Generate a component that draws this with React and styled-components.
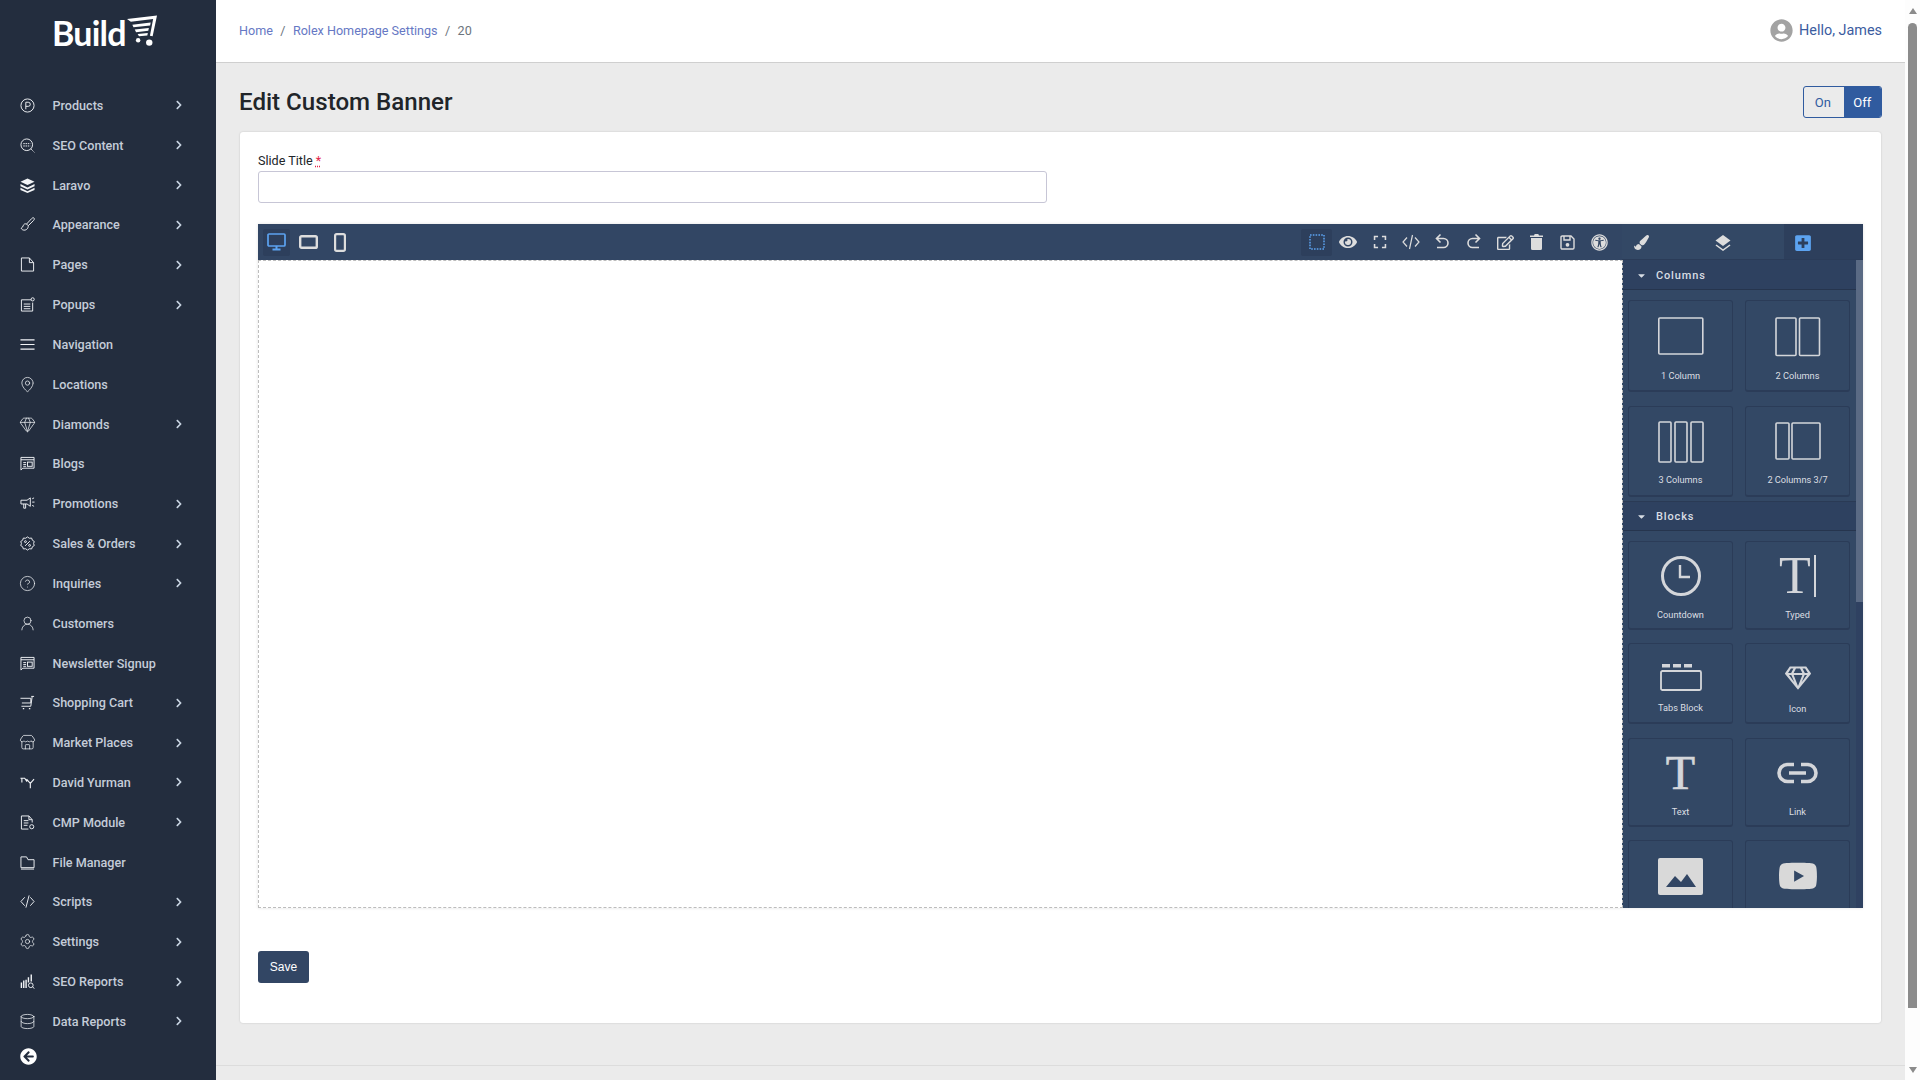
import React from "react";
import styled, { createGlobalStyle } from "styled-components";
import {
  FaChevronRight,
  FaEye,
  FaUniversalAccess,
  FaPaintBrush,
  FaPlusSquare,
  FaArrowCircleLeft,
  FaRegEdit,
  FaYoutube,
  FaUserCircle,
  FaCaretDown,
  FaRegGem,
} from "react-icons/fa";
import { Gem, CircleHelp, Database, Settings, MapPin, Store, UserRound } from "lucide-react";

const GlobalStyle = createGlobalStyle`
  html, body {
    margin: 0;
    height: 100%;
    overflow: hidden;
    background: #ebebeb;
    font-family: Roboto, "Liberation Sans", sans-serif;
  }
  * { box-sizing: border-box; }
`;

const Line = ({ children }) => (
  <svg width="15" height="15" viewBox="0 0 16 16" fill="none" stroke="currentColor" strokeWidth="1">
    {children}
  </svg>
);

const lucide = (Icon) => () => <Icon size={17} strokeWidth={1.05} />;

const NewsIcon = () => (
  <Line>
    <path d="M1 15V1.5h14V13H3zM1 4h14M3.5 7h3M3.5 9h3M3.5 11h3" />
    <rect x="8" y="6.5" width="5" height="4.5" />
  </Line>
);

const sideIcons = {
  products: () => (
    <Line>
      <circle cx="8" cy="8" r="7" />
      <path d="M6.2 12V4.5h2.6a2.2 2.2 0 010 4.4H6.2" />
    </Line>
  ),
  seo: () => (
    <Line>
      <circle cx="7.2" cy="7.2" r="6.2" />
      <path d="M11.5 11.5l3.8 3.8M3.5 6h7.5M3.5 8.5h7.5" strokeDasharray="1.6 .8" />
    </Line>
  ),
  layers: () => (
    <svg width="15" height="15" viewBox="0 0 16 16" fill="currentColor">
      <path d="M8 .5L15.5 4 8 7.5.5 4z" />
      <path d="M.5 6.5L8 10l7.5-3.5v2.3L8 12.3.5 8.8z" />
      <path d="M.5 10.5L8 14l7.5-3.5v2.2L8 16 .5 12.7z" />
    </svg>
  ),
  brush: () => (
    <Line>
      <path d="M15 1.2c-.8-.8-1.8-.3-2.6.5L7 7.5l1.8 1.8 5.6-5.5c.7-.8 1.3-1.8.6-2.6zM7 7.5c-2-.7-3.2.3-3.6 1.8-.3 1.2-1 2-2.2 2.7 1.2 2.6 5 2.6 6.5.6.9-1.2 1.2-2 1.1-3.3" />
    </Line>
  ),
  page: () => (
    <Line>
      <path d="M1.5 1h8.5l4.5 5v9h-13zM10 1v5h4.5" />
    </Line>
  ),
  popup: () => (
    <Line>
      <path d="M12 3H1.5v12h12V6M4 7.5h7M4 10h7M4 12.5h7" />
      <circle cx="13.5" cy="2.5" r="1.7" />
    </Line>
  ),
  nav: () => (
    <Line>
      <path d="M.5 3h15M.5 8h15M.5 13h15" strokeWidth="1.3" />
    </Line>
  ),
  pin: lucide(MapPin),
  gem: lucide(Gem),
  news: NewsIcon,
  promo: () => (
    <Line>
      <path d="M1 4.5h6.5L11 2v9L7.5 8.5H1zM4 8.5v4.5h2V8.5M13 3l2-1M13 6.5h2.5M13 10l2 1" />
    </Line>
  ),
  sales: () => (
    <Line>
      <path d="M8 1l2 1.4 2.4-.2.8 2.3 2 1.3-.7 2.2.7 2.2-2 1.3-.8 2.3-2.4-.2L8 15l-2-1.4-2.4.2-.8-2.3-2-1.3.7-2.2L.8 5.8l2-1.3.8-2.3 2.4.2z" />
      <path d="M5.5 10.5l5-5" />
      <circle cx="5.8" cy="6" r="1" />
      <circle cx="10.2" cy="10" r="1" />
    </Line>
  ),
  help: lucide(CircleHelp),
  user: lucide(UserRound),
  cart: () => (
    <Line>
      <path d="M.5 3.5h11v5H2M12 1.5h3M13 1.5L11.5 12H1.5" />
      <path d="M3 14.5h1.5M9.5 14.5H11" strokeWidth="1.5" />
    </Line>
  ),
  store: lucide(Store),
  dy: () => (
    <Line>
      <path d="M.5 3.5H5l2.5 3.5M2 3.5V8M7 4.5l4 4.5v5M15 4.5L11 9" strokeWidth="1.2" />
    </Line>
  ),
  cmp: () => (
    <Line>
      <path d="M13 8V5L9.5 1H1.5v14H9M9.5 1v4H13M4 6h5M4 8.5h5M4 11h4" />
      <circle cx="12.5" cy="12.5" r="2.2" fill="none" />
    </Line>
  ),
  folder: () => (
    <Line>
      <path d="M1 2h6l1.5 3H15v8.5H1zM1 15h14" />
    </Line>
  ),
  code: () => (
    <Line>
      <path d="M5 3.5L1 8l4 4.5M11 3.5L15 8l-4 4.5M9.7 1.5L6.3 14.5" />
    </Line>
  ),
  gear: lucide(Settings),
  report: () => (
    <Line>
      <path d="M1.5 15V9M4 15V7M6.5 15V6M9 9V3.5M12 8V.5" strokeWidth="1.5" />
      <circle cx="11.5" cy="12" r="2.5" />
      <path d="M13.4 13.8l2 1.7" />
    </Line>
  ),
  data: lucide(Database),
};

const menu = [
  ["Products", "products", true],
  ["SEO Content", "seo", true],
  ["Laravo", "layers", true],
  ["Appearance", "brush", true],
  ["Pages", "page", true],
  ["Popups", "popup", true],
  ["Navigation", "nav", false],
  ["Locations", "pin", false],
  ["Diamonds", "gem", true],
  ["Blogs", "news", false],
  ["Promotions", "promo", true],
  ["Sales & Orders", "sales", true],
  ["Inquiries", "help", true],
  ["Customers", "user", false],
  ["Newsletter Signup", "news", false],
  ["Shopping Cart", "cart", true],
  ["Market Places", "store", true],
  ["David Yurman", "dy", true],
  ["CMP Module", "cmp", true],
  ["File Manager", "folder", false],
  ["Scripts", "code", true],
  ["Settings", "gear", true],
  ["SEO Reports", "report", true],
  ["Data Reports", "data", true],
];

const ToolStroke = ({ children, size = 18 }) => (
  <svg width={size} height={size} viewBox="0 0 18 18" fill="none" stroke="currentColor" strokeWidth="1.6">
    {children}
  </svg>
);

const ColumnsIcon = ({ rects }) => (
  <svg width="46" height="42" viewBox="0 0 46 42" fill="none" stroke="#d4d6da" strokeWidth="1.6">
    {rects.map((r, i) => (
      <rect key={i} x={r[0]} y="1" width={r[1]} height={r[2]} rx="1" />
    ))}
  </svg>
);

const App = () => {
  return (
    <Page>
      <GlobalStyle />
      <Sidebar>
        <Logo>
          <LogoText>Build</LogoText>
          <svg width="30" height="32" viewBox="0 0 31 32" fill="#fff">
            <path d="M0 3.5l31-3.5-4.5 21.5-2.8-.6L27 3.5 4 6.5z" />
            <path d="M5.5 9.5l19-2.2-.6 3-17.2 1.8zM8 14.5l14.6-1.6-.6 2.9-12.6 1.4zM11 19l10.5-1-.5 2.7-8.6.8z" />
            <circle cx="11.5" cy="25.5" r="2.3" />
            <circle cx="23" cy="28" r="3.3" />
          </svg>
        </Logo>
        <Menu>
          {menu.map(([label, icon, sub]) => {
            const Icon = sideIcons[icon];
            return (
              <MenuItem key={label}>
                <MenuIcon>
                  <Icon />
                </MenuIcon>
                {label}
                {sub && (
                  <MenuChevron>
                    <FaChevronRight size={10} />
                  </MenuChevron>
                )}
              </MenuItem>
            );
          })}
        </Menu>
        <Collapse>
          <FaArrowCircleLeft size={17} />
        </Collapse>
      </Sidebar>

      <Main>
        <TopBar>
          <Crumbs>
            <CrumbLink>Home</CrumbLink>
            <CrumbSep>/</CrumbSep>
            <CrumbLink>Rolex Homepage Settings</CrumbLink>
            <CrumbSep>/</CrumbSep>
            <span>20</span>
          </Crumbs>
          <Hello>
            <FaUserCircle size={23} color="#a3a3a3" />
            Hello, James
          </Hello>
        </TopBar>

        <Content>
          <TitleRow>
            <Title>Edit Custom Banner</Title>
            <Toggle>
              <ToggleOption>On</ToggleOption>
              <ToggleOption $active>Off</ToggleOption>
            </Toggle>
          </TitleRow>

          <Card>
            <Label>
              Slide Title <Required>*</Required>
            </Label>
            <TextInput />

            <Editor>
              <Toolbar>
                <DeviceButton $active>
                  <svg width="19" height="18" viewBox="0 0 19 18" fill="none" stroke="currentColor" strokeWidth="1.7">
                    <rect x="1" y="1" width="17" height="12" rx="1" />
                    <path d="M9.5 13v3M5.5 16.5h8" strokeWidth="2" />
                  </svg>
                </DeviceButton>
                <DeviceButton>
                  <svg width="19" height="14" viewBox="0 0 19 14" fill="none" stroke="currentColor" strokeWidth="2.4">
                    <rect x="1.2" y="1.2" width="16.6" height="11.6" rx="1.4" />
                  </svg>
                </DeviceButton>
                <DeviceButton>
                  <svg width="12" height="19" viewBox="0 0 12 19" fill="none" stroke="currentColor" strokeWidth="2.2">
                    <rect x="1.1" y="1.1" width="9.8" height="16.8" rx="1.6" />
                  </svg>
                </DeviceButton>
                <ToolActions>
                  <ActionButton $active>
                    <svg width="16" height="16" viewBox="0 0 16 16" fill="none" stroke="#5ca3f0" strokeWidth="1.5" strokeDasharray="1.6 1.2">
                      <rect x="1" y="1" width="14" height="14" />
                    </svg>
                  </ActionButton>
                  <ActionButton>
                    <FaEye size={18} />
                  </ActionButton>
                  <ActionButton>
                    <ToolStroke size={14}>
                      <path d="M2 6.5V2h4.5M11.5 2H16v4.5M16 11.5V16h-4.5M6.5 16H2v-4.5" strokeWidth="2" />
                    </ToolStroke>
                  </ActionButton>
                  <ActionButton>
                    <ToolStroke>
                      <path d="M5 4.5L1 9l4 4.5M13 4.5L17 9l-4 4.5M10.5 2L7.5 16" strokeWidth="1.2" />
                    </ToolStroke>
                  </ActionButton>
                  <ActionButton>
                    <ToolStroke>
                      <path d="M7.5 1.5L3.5 5.5l4 4M4 5.5h6.5a4.5 4.5 0 010 9H4" />
                    </ToolStroke>
                  </ActionButton>
                  <ActionButton>
                    <ToolStroke>
                      <path d="M10.5 1.5l4 4-4 4M14 5.5H7.5a4.5 4.5 0 000 9H14" />
                    </ToolStroke>
                  </ActionButton>
                  <ActionButton>
                    <FaRegEdit size={17} />
                  </ActionButton>
                  <ActionButton>
                    <svg width="13" height="16" viewBox="0 0 13 16" fill="currentColor">
                      <path d="M0 1.5h4L4.7 0h3.6L9 1.5h4V3H0zM1 4h11v10.5a1.5 1.5 0 01-1.5 1.5h-8A1.5 1.5 0 011 14.5z" />
                    </svg>
                  </ActionButton>
                  <ActionButton>
                    <svg width="15" height="15" viewBox="0 0 15 15" fill="none" stroke="currentColor" strokeWidth="1.4">
                      <path d="M1 2.2C1 1.5 1.5 1 2.2 1H11l3 3v8.8c0 .7-.5 1.2-1.2 1.2H2.2c-.7 0-1.2-.5-1.2-1.2zM4 1.5V5h6V1.5" />
                      <circle cx="7.5" cy="9.8" r="1.2" fill="currentColor" />
                    </svg>
                  </ActionButton>
                  <ActionButton>
                    <FaUniversalAccess size={17} />
                  </ActionButton>
                </ToolActions>
                <PanelTabs>
                  <PanelTab>
                    <FaPaintBrush size={15} />
                  </PanelTab>
                  <PanelTab>
                    <svg width="16" height="16" viewBox="0 0 16 16" fill="currentColor">
                      <path d="M8 0l7.5 5.5L8 11 .5 5.5z" />
                      <path d="M1.5 9.5l6.5 4.7 6.5-4.7 1 1L8 16 .5 10.5z" />
                    </svg>
                  </PanelTab>
                  <PanelTab $active>
                    <FaPlusSquare size={18} />
                  </PanelTab>
                </PanelTabs>
              </Toolbar>

              <EditorBody>
                <Canvas />
                <BlocksPanel>
                  <BlocksList>
                    <SectionHeader>
                      <FaCaretDown size={11} />
                      Columns
                    </SectionHeader>
                    <TileGrid>
                      <Tile $h={92} $top={16} $bottom={8}>
                        <ColumnsIcon rects={[[0.8, 44, 36]]} />
                        <TileLabel>1 Column</TileLabel>
                      </Tile>
                      <Tile $h={92} $top={16} $bottom={8}>
                        <ColumnsIcon rects={[[1, 20, 37.5], [24.5, 20, 37.5]]} />
                        <TileLabel>2 Columns</TileLabel>
                      </Tile>
                      <Tile $h={91} $top={14} $bottom={9}>
                        <ColumnsIcon rects={[[1, 12, 40], [17, 12, 40], [33, 12, 40]]} />
                        <TileLabel>3 Columns</TileLabel>
                      </Tile>
                      <Tile $h={91} $top={15} $bottom={9}>
                        <ColumnsIcon rects={[[1, 13, 36], [17, 28, 36]]} />
                        <TileLabel>2 Columns 3/7</TileLabel>
                      </Tile>
                    </TileGrid>
                    <SectionHeader $blocks>
                      <FaCaretDown size={11} />
                      Blocks
                    </SectionHeader>
                    <TileGrid>
                      <Tile $h={89} $top={13} $bottom={7}>
                        <svg width="42" height="42" viewBox="0 0 42 42" fill="none" stroke="#d4d6da" strokeWidth="3">
                          <circle cx="21" cy="21" r="18.5" />
                          <path d="M20 10v12h10" strokeWidth="2.4" />
                        </svg>
                        <TileLabel>Countdown</TileLabel>
                      </Tile>
                      <Tile $h={89} $top={12} $bottom={7}>
                        <TypedMark>
                          T<TypedCaret />
                        </TypedMark>
                        <TileLabel>Typed</TileLabel>
                      </Tile>
                      <Tile $h={81} $top={20} $bottom={8}>
                        <svg width="42" height="27" viewBox="0 0 42 27" fill="#d4d6da">
                          <path d="M2 0h8v3.5H2zM13 0h8v3.5h-8zM24 0h8v3.5h-8z" />
                          <rect x="1" y="7" width="40" height="19" rx="1.5" fill="none" stroke="#d4d6da" strokeWidth="1.8" />
                        </svg>
                        <TileLabel>Tabs Block</TileLabel>
                      </Tile>
                      <Tile $h={81} $top={21} $bottom={7}>
                        <FaRegGem size={26} color="#d4d6da" />
                        <TileLabel>Icon</TileLabel>
                      </Tile>
                      <Tile $h={89} $top={14} $bottom={7}>
                        <TextMark>T</TextMark>
                        <TileLabel>Text</TileLabel>
                      </Tile>
                      <Tile $h={89} $top={23} $bottom={7}>
                        <svg width="41" height="22" viewBox="0 0 41 22" fill="none" stroke="#d4d6da" strokeWidth="3.6">
                          <path d="M17 2.5h-6.5a8.5 8.5 0 000 17H17M24 2.5h6.5a8.5 8.5 0 010 17H24M12 11h17" />
                        </svg>
                        <TileLabel>Link</TileLabel>
                      </Tile>
                      <Tile $h={89} $top={17}>
                        <svg width="45" height="37" viewBox="0 0 45 37">
                          <rect width="45" height="37" rx="2" fill="#d9d9d9" />
                          <path d="M8 29l9-11 6 6 6-8 9 13z" fill="#324664" />
                        </svg>
                      </Tile>
                      <Tile $h={89} $top={15}>
                        <FaYoutube size={40} color="#d9d9d9" />
                      </Tile>
                    </TileGrid>
                  </BlocksList>
                  <PanelScroll>
                    <PanelThumb />
                  </PanelScroll>
                </BlocksPanel>
              </EditorBody>
            </Editor>

            <SaveButton>Save</SaveButton>
          </Card>
          <FooterLine />
        </Content>
      </Main>

      <PageScroll>
        <ScrollArrow />
        <ScrollThumb />
        <ScrollArrow $down />
      </PageScroll>
    </Page>
  );
};

const Page = styled.div`
  display: flex;
  width: 1920px;
  height: 1080px;
  overflow: hidden;
`;

const Sidebar = styled.aside`
  flex: 0 0 216px;
  display: flex;
  flex-direction: column;
  height: 1080px;
  background: #232d3e;
`;

const Logo = styled.div`
  height: 85.5px;
  padding: 15px 0 0 52px;
  display: flex;
  align-items: flex-start;
  gap: 1px;
`;

const LogoText = styled.span`
  font-family: Lato, sans-serif;
  font-size: 34px;
  line-height: 36px;
  font-weight: 700;
  letter-spacing: -0.8px;
  color: #fff;
`;

const Menu = styled.nav`
  display: flex;
  flex-direction: column;
`;

const MenuItem = styled.a`
  height: 39.83px;
  padding: 0 32px 0 20px;
  display: flex;
  align-items: center;
  font-size: 12.6px;
  font-weight: 500;
  color: #c4ccd8;
`;

const MenuIcon = styled.span`
  flex: 0 0 32.5px;
  display: flex;
  color: #f2f4f7;

  svg.lucide {
    margin-left: -1px;
  }
`;

const MenuChevron = styled.span`
  margin-left: auto;
  display: flex;
  color: #c9d5e3;
`;

const Collapse = styled.div`
  padding: 7px 0 0 20px;
  display: flex;
  color: #fff;
`;

const Main = styled.main`
  flex: 1;
  display: flex;
  flex-direction: column;
  min-width: 0;
`;

const TopBar = styled.header`
  height: 63px;
  flex-shrink: 0;
  padding: 0 23px 1px 23px;
  display: flex;
  align-items: center;
  justify-content: space-between;
  background: #fff;
  border-bottom: 1px solid #cfcfcf;
`;

const Crumbs = styled.div`
  display: flex;
  gap: 7.4px;
  font-size: 12.6px;
  color: #6c757d;
`;

const CrumbLink = styled.a`
  color: #6678c4;
`;

const CrumbSep = styled.span`
  color: #6c757d;
`;

const Hello = styled.div`
  display: flex;
  align-items: center;
  gap: 6px;
  font-size: 14.4px;
  color: #3b5c9f;
`;

const Content = styled.div`
  flex: 1;
  padding: 23px 24px 0;
  background: #ebebeb;
`;

const TitleRow = styled.div`
  height: 46px;
  display: flex;
  align-items: flex-start;
  justify-content: space-between;
`;

const Title = styled.h1`
  margin: 0 0 0 -1px;
  font-size: 24.1px;
  line-height: 32px;
  font-weight: 500;
  color: #212529;
`;

const Toggle = styled.div`
  display: flex;
  height: 32px;
  width: 79px;
  margin-right: -1px;
  border: 1px solid #305b9f;
  border-radius: 3px;
  overflow: hidden;
`;

const ToggleOption = styled.span`
  flex: 1;
  padding-right: ${(p) => (p.$active ? "0" : "2px")};
  display: flex;
  align-items: center;
  justify-content: center;
  font-size: 13px;
  color: ${(p) => (p.$active ? "#fff" : "#305b9f")};
  background: ${(p) => (p.$active ? "#305b9f" : "transparent")};
`;

const Card = styled.section`
  height: 891px;
  padding: 21px 18px 0;
  display: flex;
  flex-direction: column;
  background: #fff;
  border-radius: 3px;
  box-shadow: 0 0 2px rgba(0, 0, 0, 0.18);
`;

const Label = styled.label`
  font-size: 12.6px;
  line-height: 16px;
  margin-bottom: 2px;
  color: #212529;
`;

const Required = styled.abbr`
  color: #e3264a;
  text-decoration: underline dotted;
`;

const TextInput = styled.input`
  width: 789px;
  height: 32px;
  flex-shrink: 0;
  border: 1px solid #c7c6d6;
  border-radius: 3px;
  outline: none;
`;

const Editor = styled.div`
  margin-top: 21px;
  height: 684px;
  display: flex;
  flex-direction: column;
  box-shadow: 0 0 3px rgba(0, 0, 0, 0.12);
`;

const Toolbar = styled.div`
  height: 36px;
  flex-shrink: 0;
  padding-left: 5px;
  display: flex;
  align-items: center;
  background: #324664;
  color: #ddd;
`;

const DeviceButton = styled.span`
  width: 27px;
  height: 27px;
  margin-right: 5.5px;
  margin-left: -0.5px;
  display: flex;
  align-items: center;
  justify-content: center;
  border-radius: 2px;
  color: ${(p) => (p.$active ? "#5ca3f0" : "#ddd")};
  background: ${(p) => (p.$active ? "#2d3f5c" : "transparent")};
`;

const ToolActions = styled.div`
  margin-left: auto;
  padding-right: 7px;
  display: flex;
  align-items: center;
`;

const ActionButton = styled.span`
  width: 31.4px;
  height: 27px;
  display: flex;
  align-items: center;
  justify-content: center;
  border-radius: 2px;
  background: ${(p) => (p.$active ? "#2d3f5c" : "transparent")};
`;

const PanelTabs = styled.div`
  flex: 0 0 241px;
  height: 36px;
  display: flex;
`;

const PanelTab = styled.span`
  flex: 1;
  padding: 2px 0 0 ${(p) => (p.$active ? "10px" : "12px")};
  display: flex;
  align-items: center;
  color: ${(p) => (p.$active ? "#5ca3f0" : "#ddd")};
  background: ${(p) => (p.$active ? "#2d3f5c" : "#334865")};
  border-bottom: 1px solid #2b3c58;
`;

const EditorBody = styled.div`
  flex: 1;
  min-height: 0;
  display: flex;
`;

const Canvas = styled.div`
  flex: 1;
  background: #fff;
  border: 1px dashed #bdbdbd;
  border-right: none;
`;

const BlocksPanel = styled.div`
  flex: 0 0 241px;
  margin-left: -1px;
  display: flex;
  overflow: hidden;
  background: #334865;
  border-left: 1px dashed #bdbdbd;
`;

const BlocksList = styled.div`
  flex: 1;
  min-width: 0;
`;

const SectionHeader = styled.div`
  height: 30px;
  margin-top: ${(p) => (p.$blocks ? "4px" : "0")};
  padding: 2px 0 0 13px;
  display: flex;
  align-items: center;
  gap: 9px;
  font-size: 11px;
  font-weight: 500;
  letter-spacing: 0.85px;
  color: #d8dde4;
  background: #2e4160;
  border-bottom: 1px solid #26354e;
  border-top: ${(p) => (p.$blocks ? "1px solid #2a3a55" : "none")};
`;

const TileGrid = styled.div`
  padding: 10px 5px 0;
  display: grid;
  grid-template-columns: 105px 105px;
  column-gap: 12px;
  row-gap: 13.5px;
`;

const Tile = styled.div`
  height: ${(p) => p.$h}px;
  padding: ${(p) => p.$top}px 0 ${(p) => p.$bottom || 0}px;
  display: flex;
  flex-direction: column;
  align-items: center;
  border: 1px solid #2b3c58;
  border-bottom-width: 2px;
  border-radius: 3px;
  background: #334865;
`;

const TileLabel = styled.span`
  margin-top: auto;
  font-size: 9.2px;
  line-height: 12px;
  color: #dcdfe3;
`;

const TypedMark = styled.div`
  display: flex;
  align-items: center;
  font-family: "Liberation Serif", serif;
  font-size: 52px;
  line-height: 44px;
  color: #d4d6da;
`;

const TypedCaret = styled.span`
  width: 2px;
  height: 42px;
  margin-left: 3px;
  background: #d4d6da;
`;

const TextMark = styled.div`
  font-family: "Liberation Serif", serif;
  font-size: 48px;
  line-height: 40px;
  -webkit-text-stroke: 0.7px #d4d6da;
  color: #d4d6da;
`;

const PanelScroll = styled.div`
  flex: 0 0 7px;
  background: #2f4161;
`;

const PanelThumb = styled.div`
  height: 342px;
  background: #5a6a84;
`;

const SaveButton = styled.button`
  align-self: flex-start;
  margin-top: 43px;
  width: 51px;
  height: 32px;
  border: none;
  border-radius: 3px;
  font-family: "Liberation Sans", sans-serif;
  font-size: 12px;
  color: #fff;
  background: #324664;
`;

const FooterLine = styled.div`
  margin: 42px -24px 0;
  border-top: 1px solid #dcdcdc;
`;

const PageScroll = styled.div`
  flex: 0 0 15px;
  display: flex;
  flex-direction: column;
  align-items: center;
  background: #fdfdfd;
`;

const ScrollArrow = styled.div`
  width: 0;
  height: 0;
  margin: ${(p) => (p.$down ? "auto 0 7px" : "8px 0 0")};
  border-left: 4.5px solid transparent;
  border-right: 4.5px solid transparent;
  border-bottom: ${(p) => (p.$down ? "none" : "6px solid #8b8b8b")};
  border-top: ${(p) => (p.$down ? "6px solid #8b8b8b" : "none")};
`;

const ScrollThumb = styled.div`
  width: 9px;
  height: 985px;
  margin-top: 9px;
  border-radius: 5px 5px 0 0;
  background: #8b8b8b;
`;

export default App;
